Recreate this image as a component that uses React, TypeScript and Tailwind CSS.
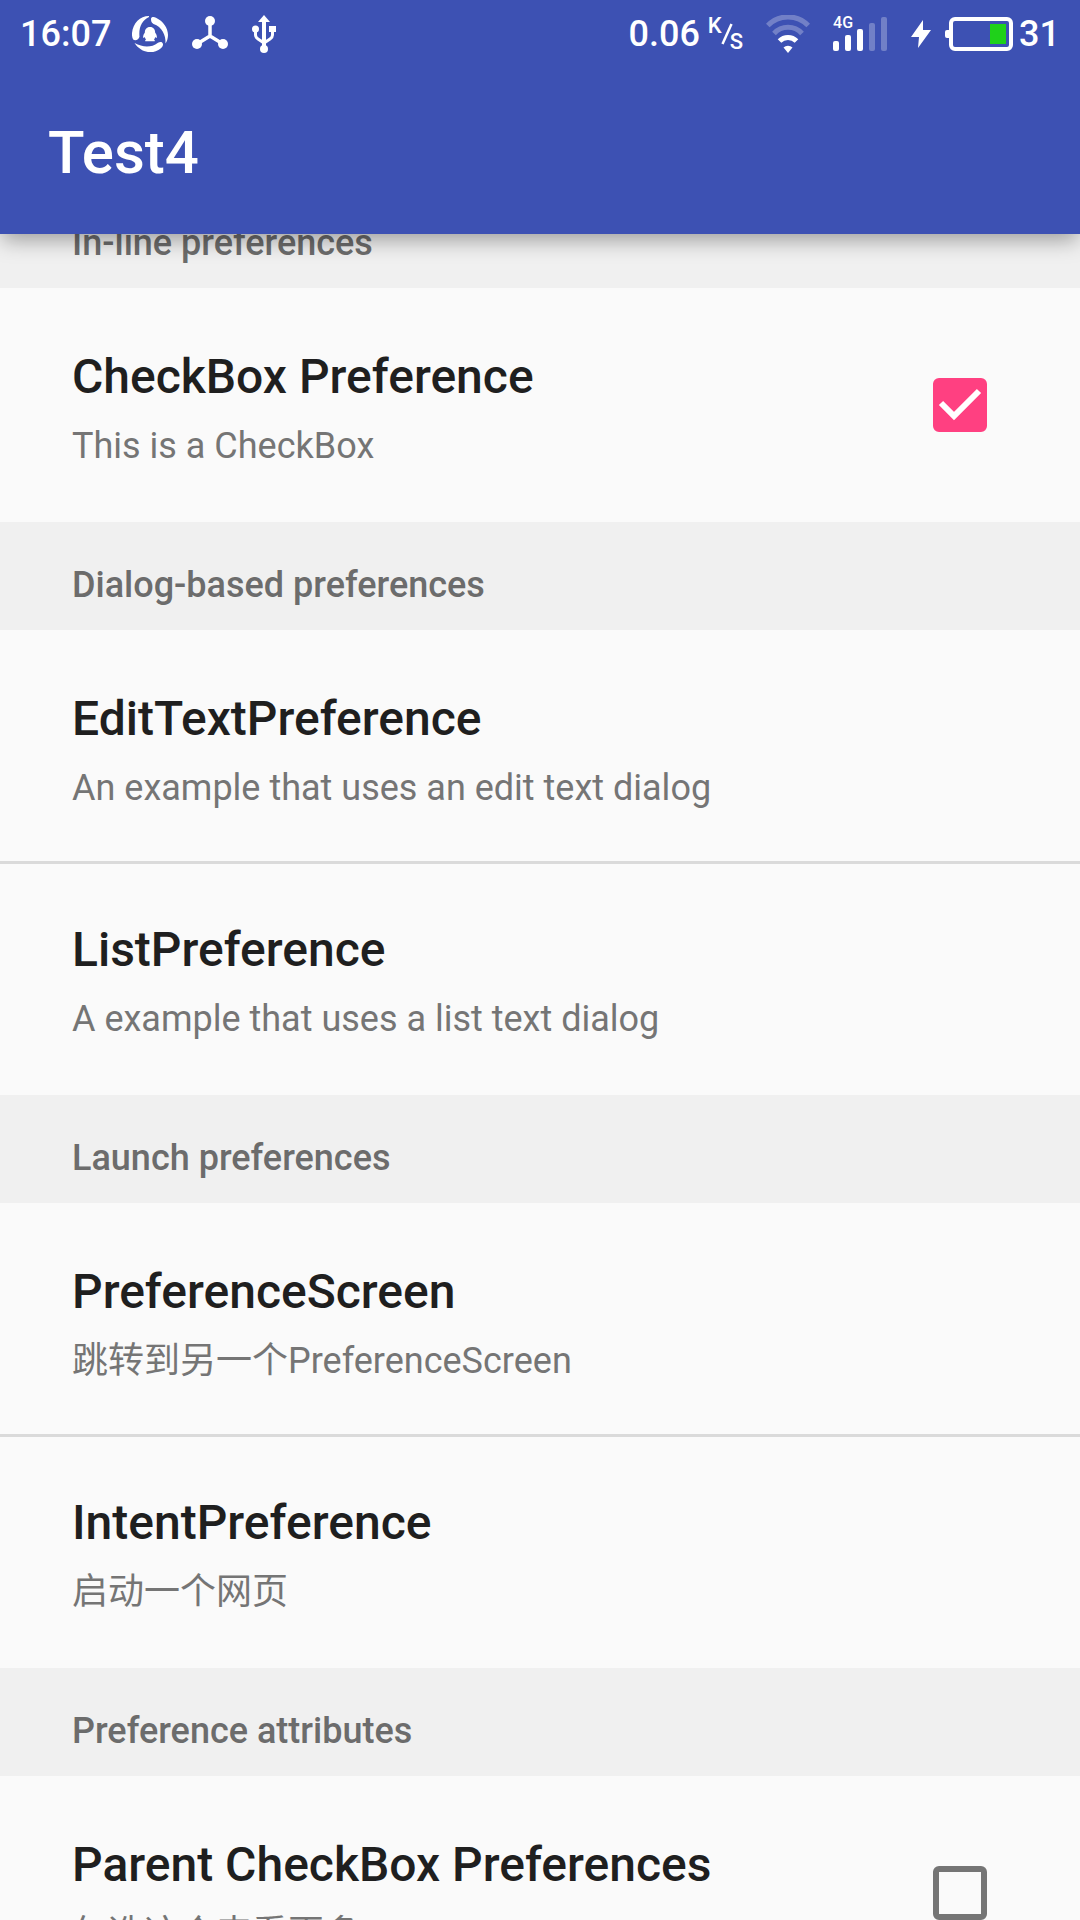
import { useState } from "react";

function Category({ title }: { title: string }) {
  return (
    <h2 className="flex h-[108px] items-end bg-[#f0f0f0] px-[72px] pb-[24px] text-[36px] leading-[42px] font-medium text-[#6c6c6c]">
      {title}
    </h2>
  );
}

function Texts({ title, summary }: { title: string; summary: string }) {
  return (
    <span className="flex flex-col items-start gap-[18px] text-left">
      <span className="text-[48px] leading-[56px] font-medium text-[#1f1f1f]">{title}</span>
      <span className="text-[36px] leading-[46px] text-[#757575]">{summary}</span>
    </span>
  );
}

function Item({ title, summary, divider }: { title: string; summary: string; divider?: boolean }) {
  return (
    <button
      type="button"
      className={
        divider
          ? "block w-full border-b-[3px] border-[#dadada] px-[72px] pt-[61px] pb-[50px]"
          : "block w-full px-[72px] pt-[58px] pb-[53px]"
      }
    >
      <Texts title={title} summary={summary} />
    </button>
  );
}

function CheckItem({ title, summary, initial }: { title: string; summary: string; initial: boolean }) {
  const [on, setOn] = useState(initial);
  return (
    <label className="flex justify-between pt-[61px] pr-[93px] pb-[53px] pl-[72px]">
      <Texts title={title} summary={summary} />
      <span className="mt-[29px] grid self-start">
        <input
          type="checkbox"
          checked={on}
          onChange={(e) => setOn(e.target.checked)}
          className="col-start-1 row-start-1 size-[54px] appearance-none rounded-[6px] border-[6px] border-[#757575] checked:border-[#ff4081] checked:bg-[#ff4081]"
        />
        {on && (
          <svg viewBox="0 0 54 54" className="pointer-events-none col-start-1 row-start-1 size-[54px]">
            <path d="M8 25 L21 38 L46 13" fill="none" stroke="#fff" strokeWidth="6" />
          </svg>
        )}
      </span>
    </label>
  );
}

function SwirlIcon() {
  return (
    <svg viewBox="0 0 36 36" className="ml-[21px] size-[36px]" fill="#fff">
      <path d="M17 0C8 0 1 7 0 17c-.2 3 .3 5 1.200 6.500C3 25 7 24 7.500 20.500 6.500 12 10 4 17 1Z" />
      <path d="M19 3c0-2 2.500-2.500 5-1.300C31 5 36 12 36 19c0 3-1 6.500-2.500 8.500C34 19 30 11 21.500 8 19.500 7 19 5 19 3Z" />
      <path d="M2.500 27C7 34 15 37.500 22 35.700 27 34.500 31.500 31 31 28c-.5-2.500-3-2.500-5-1.300C19 32 11 31.500 2.500 27Z" />
      <path d="M18 11c-3.500 0-5.200 2.600-5.200 5.800-1 1.200-2 3.300-1.600 5 .6.500 1.200-.3 1.600-.8.200 1.200.7 1.900 1.300 2.500-.8.400-1.100 1-.8 1.700h9.400c.3-.7 0-1.300-.8-1.700.6-.6 1.100-1.300 1.300-2.500.4.500 1 1.300 1.600.8.400-1.700-.6-3.800-1.600-5C23.200 13.600 21.500 11 18 11Z" />
    </svg>
  );
}

function NodesIcon() {
  return (
    <svg viewBox="0 0 36 36" className="ml-[24px] size-[36px]" fill="#fff">
      <path d="M18 6v14M18 20L5 28M18 20l13 8" stroke="#fff" strokeWidth="3.500" />
      <circle cx="18" cy="5" r="5" />
      <circle cx="5" cy="28" r="5" />
      <circle cx="31" cy="28" r="5" />
    </svg>
  );
}

function UsbIcon() {
  return (
    <svg viewBox="0 0 24 38" className="ml-[24px] h-[38px] w-[24px]" fill="#fff">
      <path d="M12 0l6 7H6Z" />
      <path d="M12 6v28" stroke="#fff" strokeWidth="4" />
      <path d="M3.500 14v6c0 2 1 3 2.500 4l6 4M20.500 14v6c0 2-1 3-2.500 4l-6 4" fill="none" stroke="#fff" strokeWidth="3" />
      <circle cx="3.500" cy="14" r="3.500" />
      <path d="M17 11h7v6h-7z" />
      <circle cx="12" cy="34" r="4" />
    </svg>
  );
}

function WifiIcon() {
  return (
    <svg viewBox="0 0 44 38" className="ml-[23px] h-[38px] w-[44px]" fill="none" stroke="#fff" strokeWidth="5">
      <g opacity=".27">
        <path d="M1.800 10.500a28 28 0 0 1 40.400 0" />
        <path d="M8 18.500a19 19 0 0 1 28 0" />
      </g>
      <path d="M13.500 26a12 12 0 0 1 17 0" />
      <path d="M22 38l-4.500-5.500a6.500 6.500 0 0 1 9 0Z" fill="#fff" stroke="none" />
    </svg>
  );
}

function SignalIcon() {
  return (
    <svg viewBox="0 0 54 34" className="h-[34px] w-[54px]" fill="#fff">
      <rect x="0" y="24" width="6" height="10" rx="2" />
      <rect x="12" y="18" width="6" height="16" rx="2" />
      <rect x="24" y="12" width="6" height="22" rx="2" />
      <rect x="36" y="6" width="6" height="28" rx="2" opacity=".27" />
      <rect x="48" y="0" width="6" height="34" rx="2" opacity=".27" />
    </svg>
  );
}

function StatusBar() {
  return (
    <div className="flex h-[67px] items-center pr-[20px] pl-[20px] text-[36px] leading-[42px] font-medium">
      <span>16:07</span>
      <SwirlIcon />
      <NodesIcon />
      <UsbIcon />
      <span className="ml-auto">0.06</span>
      <span className="ml-[8px] flex h-[34px] text-[22px] leading-[18px]">
        <span>K</span>
        <svg viewBox="0 0 12 22" className="-mr-[3px] -ml-[1px] mt-[6px] h-[22px] w-[12px]">
          <path d="M1.500 21L10.500 1" stroke="#fff" strokeWidth="2.500" />
        </svg>
        <span className="self-end">S</span>
      </span>
      <WifiIcon />
      <span className="relative ml-[23px]">
        <SignalIcon />
        <span className="absolute top-[-3px] left-0 text-[16px] leading-[18px]">4G</span>
      </span>
      <svg viewBox="0 0 20 28" className="ml-[24px] h-[28px] w-[20px]" fill="#fff">
        <path d="M12 0L0 17h8L7 28l13-18h-8Z" />
      </svg>
      <svg viewBox="0 0 68 34" className="ml-[14px] h-[34px] w-[68px]">
        <rect x="0" y="13" width="6" height="8" rx="2" fill="#fff" />
        <rect x="6" y="2" width="60" height="30" rx="4" fill="none" stroke="#fff" strokeWidth="4" />
        <rect x="45" y="7" width="16" height="20" fill="#1fd11a" />
      </svg>
      <span className="ml-[6px]">31</span>
    </div>
  );
}

export default function App() {
  return (
    <div
      className="flex h-screen flex-col overflow-hidden bg-[#fafafa]"
      style={{ fontFamily: 'Roboto, "Noto Sans CJK SC", sans-serif' }}
    >
      <header className="z-10 shrink-0 bg-[#3d51b3] text-white shadow-[0_8px_20px_-2px_rgba(0,0,0,0.35)]">
        <StatusBar />
        <h1 className="px-[48px] pt-[51px] pb-[46px] text-[60px] leading-[70px] font-medium">Test4</h1>
      </header>
      <main className="-mt-[54px]">
        <Category title="In-line preferences" />
        <CheckItem title="CheckBox Preference" summary="This is a CheckBox" initial={true} />
        <Category title="Dialog-based preferences" />
        <Item title="EditTextPreference" summary="An example that uses an edit text dialog" divider />
        <Item title="ListPreference" summary="A example that uses a list text dialog" />
        <Category title="Launch preferences" />
        <Item title="PreferenceScreen" summary="跳转到另一个PreferenceScreen" divider />
        <Item title="IntentPreference" summary="启动一个网页" />
        <Category title="Preference attributes" />
        <CheckItem title="Parent CheckBox Preferences" summary="勾选这个来看更多" initial={false} />
      </main>
    </div>
  );
}
